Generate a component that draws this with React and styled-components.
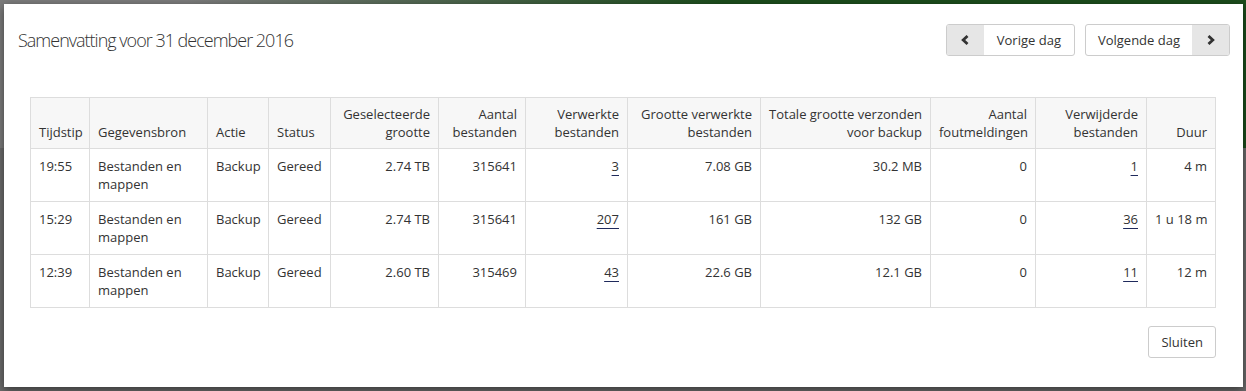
import React from 'react';
import styled, { createGlobalStyle } from 'styled-components';

const GlobalStyle = createGlobalStyle`
  html, body {
    margin: 0;
    padding: 0;
  }
  body {
    font-family: 'Open Sans', 'Liberation Sans', sans-serif;
    font-size: 13px;
    color: #333;
  }
`;

const Backdrop = styled.div`
  box-sizing: border-box;
  height: 391px;
  padding: 4px;
  background:
    linear-gradient(90deg, #7c7c7c 15%, #1c4d1c 58%) top / 100% 148px no-repeat,
    #6c6c6c;
  display: flex;
`;

const Modal = styled.div`
  flex: 1;
  display: flex;
  flex-direction: column;
  background: #fff;
  box-shadow: 0 3px 9px rgba(0, 0, 0, 0.5);
`;

const Header = styled.div`
  display: flex;
  align-items: center;
  justify-content: space-between;
  padding: 20px 13px 0 14px;
`;

const Title = styled.h4`
  margin: 0;
  font-size: 18px;
  font-weight: 300;
  letter-spacing: -1px;
  color: #333;
`;

const Nav = styled.div`
  display: flex;
  gap: 10px;
`;

const DayButton = styled.button`
  display: flex;
  align-items: stretch;
  height: 32px;
  padding: 0;
  border: 1px solid #ccc;
  border-radius: 3px;
  background: #fff;
  font-family: inherit;
  font-size: 13px;
  color: #333;
  overflow: hidden;
  cursor: pointer;
`;

const ButtonIcon = styled.span`
  display: flex;
  align-items: center;
  justify-content: center;
  width: 37px;
  background: #e6e6e6;
  color: #333;
`;

const ButtonLabel = styled.span`
  display: flex;
  align-items: center;
  padding: 0 ${p => p.$pad}px;
`;

const Body = styled.div`
  padding: 41px 27px 0 26px;
`;

const Table = styled.table`
  width: 100%;
  table-layout: fixed;
  border-collapse: collapse;
  font-size: 13px;
  line-height: 18px;
  color: #333;
`;

const Th = styled.th`
  background: #f7f7f7;
  border: 1px solid #ddd;
  padding: 7px 8px;
  font-weight: 400;
  vertical-align: bottom;
  text-align: ${p => (p.$right ? 'right' : 'left')};
`;

const Td = styled.td`
  border: 1px solid #ddd;
  padding: 8px;
  vertical-align: top;
  text-align: ${p => (p.$right ? 'right' : 'left')};
  white-space: ${p => (p.$nowrap ? 'nowrap' : 'normal')};
`;

const CountLink = styled.a`
  color: #333;
  text-decoration: underline;
  text-decoration-color: #1f2a5c;
  text-underline-offset: 4px;
  cursor: pointer;
`;

const Footer = styled.div`
  display: flex;
  justify-content: flex-end;
  padding: 18px 27px 30px;
`;

const CloseButton = styled.button`
  height: 32px;
  padding: 0 12px;
  border: 1px solid #ccc;
  border-radius: 3px;
  background: #fff;
  font-family: inherit;
  font-size: 13px;
  color: #333;
  cursor: pointer;
`;

const Chevron = ({ dir }) => (
  <svg width="8" height="10" viewBox="0 0 8 10" aria-hidden="true">
    <polyline
      points={dir === 'left' ? '6.5,1 2.2,5 6.5,9' : '1.5,1 5.8,5 1.5,9'}
      fill="none"
      stroke="currentColor"
      strokeWidth="2.8"
    />
  </svg>
);

const columns = [
  { label: 'Tijdstip', width: 59 },
  { label: 'Gegevensbron', width: 118 },
  { label: 'Actie', width: 61 },
  { label: 'Status', width: 62 },
  { label: 'Geselecteerde grootte', width: 108, right: true },
  { label: 'Aantal bestanden', width: 87, right: true },
  { label: 'Verwerkte bestanden', width: 102, right: true },
  { label: 'Grootte verwerkte bestanden', width: 133, right: true },
  { label: 'Totale grootte verzonden voor backup', width: 170, right: true },
  { label: 'Aantal foutmeldingen', width: 105, right: true },
  { label: 'Verwijderde bestanden', width: 111, right: true },
  { label: 'Duur', width: 69, right: true },
];

const rows = [
  ['19:55', '2.74 TB', '315641', '3', '7.08 GB', '30.2 MB', '0', '1', '4 m'],
  ['15:29', '2.74 TB', '315641', '207', '161 GB', '132 GB', '0', '36', '1 u 18 m'],
  ['12:39', '2.60 TB', '315469', '43', '22.6 GB', '12.1 GB', '0', '11', '12 m'],
];

const App = () => (
  <>
    <GlobalStyle />
    <Backdrop>
      <Modal>
        <Header>
          <Title>Samenvatting voor 31 december 2016</Title>
          <Nav>
            <DayButton>
              <ButtonIcon>
                <Chevron dir="left" />
              </ButtonIcon>
              <ButtonLabel $pad={13}>Vorige dag</ButtonLabel>
            </DayButton>
            <DayButton>
              <ButtonLabel $pad={12}>Volgende dag</ButtonLabel>
              <ButtonIcon>
                <Chevron dir="right" />
              </ButtonIcon>
            </DayButton>
          </Nav>
        </Header>
        <Body>
          <Table>
            <colgroup>
              {columns.map(c => (
                <col key={c.label} style={{ width: c.width }} />
              ))}
            </colgroup>
            <thead>
              <tr>
                {columns.map(c => (
                  <Th key={c.label} $right={c.right}>
                    {c.label}
                  </Th>
                ))}
              </tr>
            </thead>
            <tbody>
              {rows.map(([time, sel, count, done, doneSize, sent, errors, removed, duration]) => (
                <tr key={time}>
                  <Td>{time}</Td>
                  <Td>Bestanden en mappen</Td>
                  <Td>Backup</Td>
                  <Td>Gereed</Td>
                  <Td $right>{sel}</Td>
                  <Td $right>{count}</Td>
                  <Td $right>
                    <CountLink>{done}</CountLink>
                  </Td>
                  <Td $right>{doneSize}</Td>
                  <Td $right>{sent}</Td>
                  <Td $right>{errors}</Td>
                  <Td $right>
                    <CountLink>{removed}</CountLink>
                  </Td>
                  <Td $right $nowrap>
                    {duration}
                  </Td>
                </tr>
              ))}
            </tbody>
          </Table>
        </Body>
        <Footer>
          <CloseButton>Sluiten</CloseButton>
        </Footer>
      </Modal>
    </Backdrop>
  </>
);

export default App;
